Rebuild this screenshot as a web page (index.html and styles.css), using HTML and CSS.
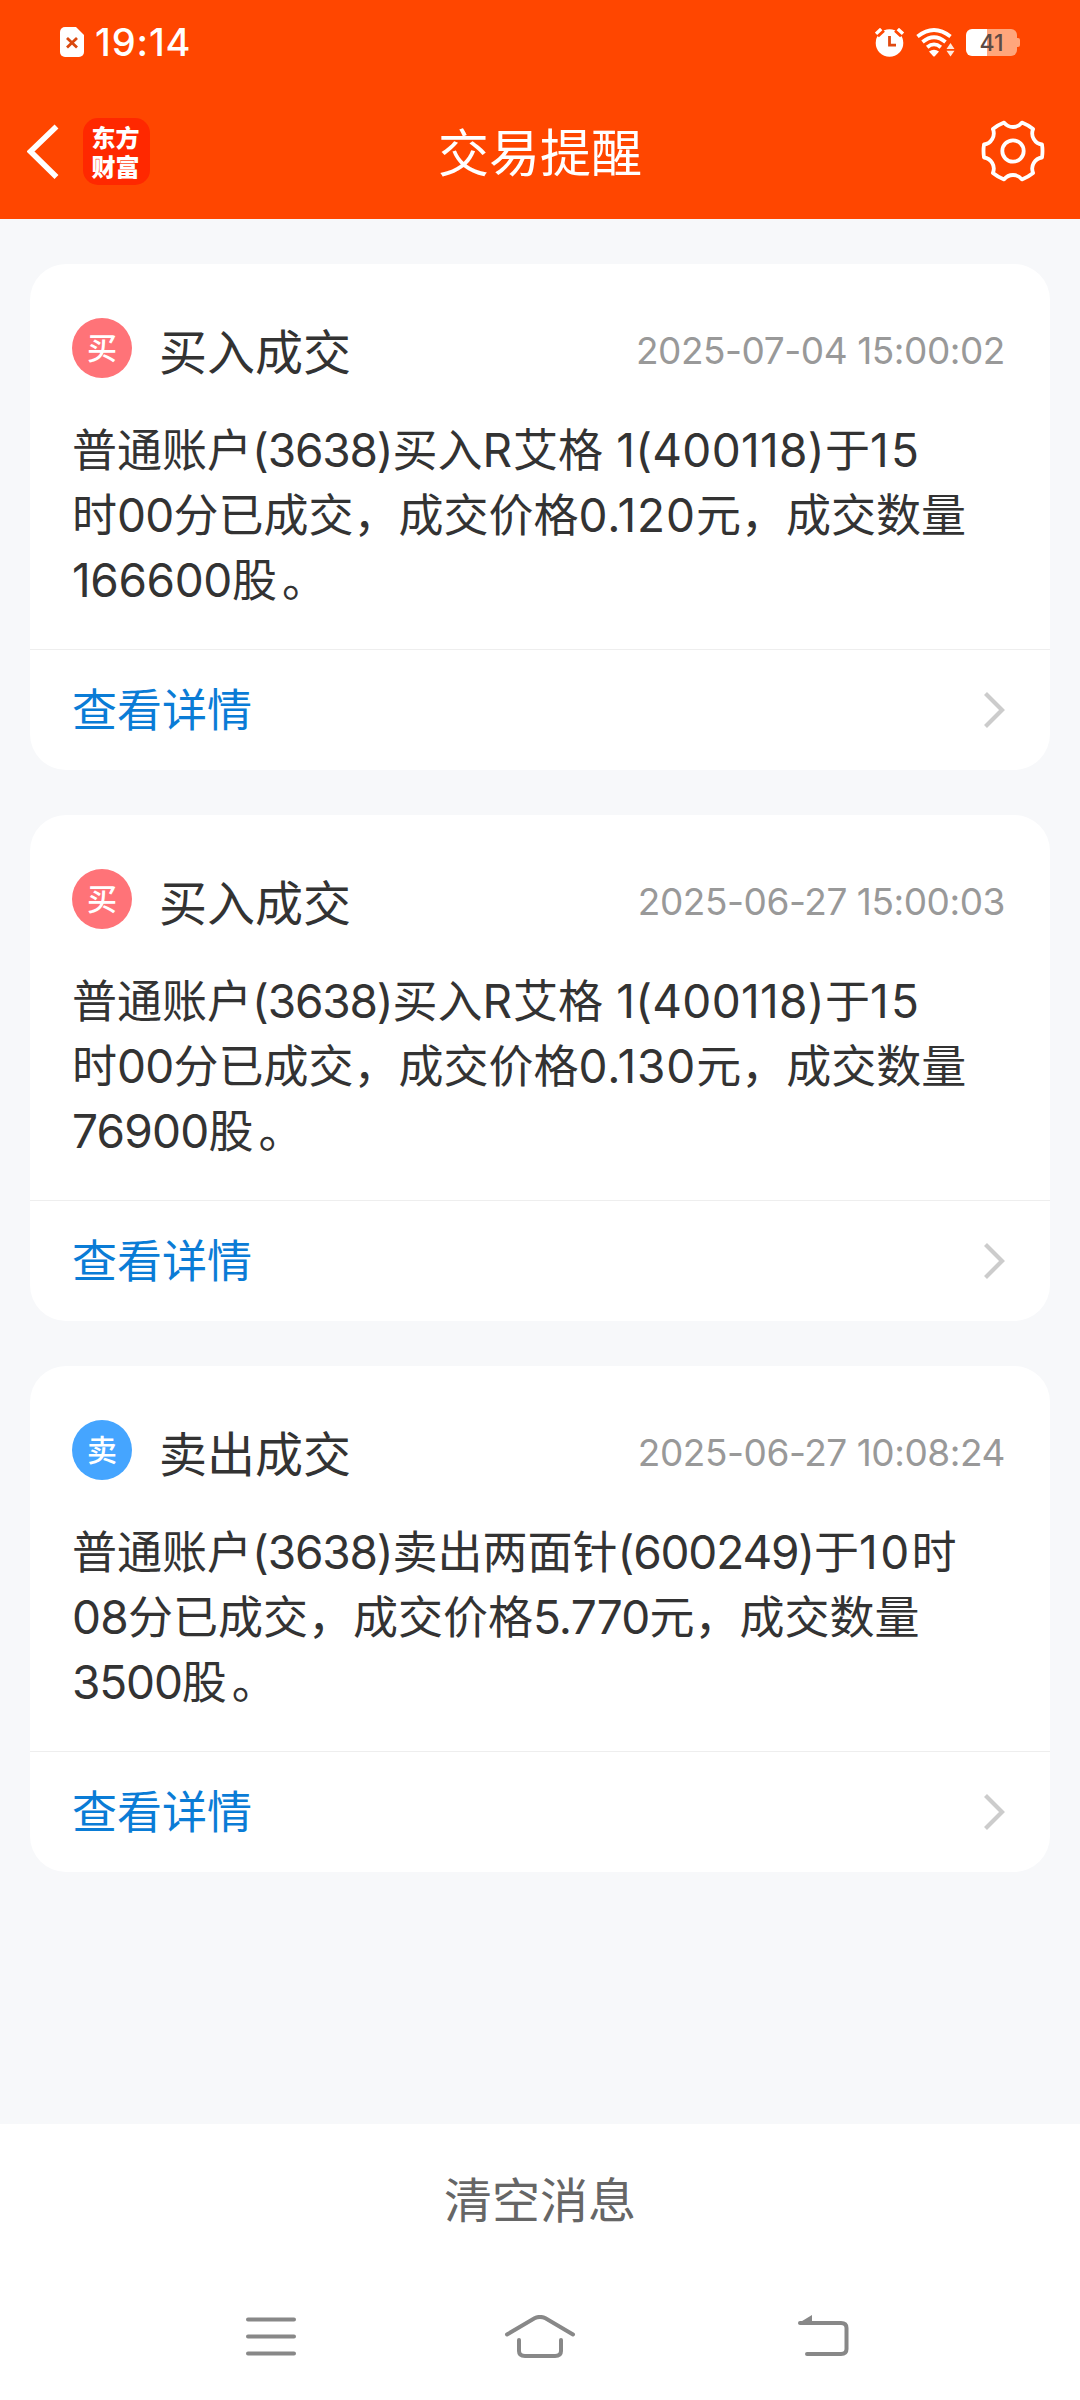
FILE: index.html
```html
<!DOCTYPE html>
<html lang="zh-CN">
<head>
<meta charset="utf-8">
<title>交易提醒</title>
<link rel="stylesheet" href="styles.css">
</head>
<body>
<div class="screen">
  <header class="header">
    <div class="status">
      <div class="status-side">
        <svg class="sim" width="24" height="30" viewBox="0 0 24 30"><path d="M5 0H16L24 8V25a5 5 0 0 1-5 5H5a5 5 0 0 1-5-5V5a5 5 0 0 1 5-5Z" fill="#fff"/><path d="M7 11l10 9.500M17 11L7 20.500" stroke="#d9480f" stroke-width="2.800"/></svg>
        <span class="clock">19:14</span>
      </div>
      <div class="status-side">
        <svg width="30" height="29" viewBox="0 0 30 29"><circle cx="14.500" cy="15" r="13.800" fill="#fff"/><path d="M1.500 6.800L7.500 1.200M27.500 6.800L21.500 1.200" stroke="#ff4600" stroke-width="7"/><path d="M1 5.800L6.200 1M28 5.800L22.800 1" stroke="#fff" stroke-width="3.400"/><path d="M14.500 8v9.200H21" fill="none" stroke="#e04a10" stroke-width="2.800"/></svg>
        <svg class="wifi" width="39" height="29" viewBox="0 0 39 29"><g fill="none" stroke="#fff" stroke-width="3.800"><path d="M1.500 8.500Q18 -4.500 34.500 8.500"/><path d="M6.500 14Q18 4.500 29.500 14"/><path d="M11.200 19.300Q18 13.500 24.800 19.300"/></g><path d="M13 23.500Q18 20 23 23.500L19 28Q18 29 17 28Z" fill="#fff"/><path d="M34.500 15L38.500 21H30.500ZM34.500 28.500L38.500 22.800H30.500Z" fill="#ffe9dc"/></svg>
        <div class="battery"><span class="battery-level">41</span><i class="battery-tip"></i></div>
      </div>
    </div>
    <div class="nav">
      <div class="nav-left">
        <svg width="32" height="56" viewBox="0 0 32 56"><path d="M29.500 2.500L3.500 27.500L29.500 53" fill="none" stroke="#fff" stroke-width="5.600"/></svg>
        <div class="logo">东方<br>财富</div>
      </div>
      <h1 class="title">交易提醒</h1>
      <div class="nav-right">
        <svg width="64" height="64" viewBox="-32 -32 64 64" fill="none" stroke="#fff" stroke-width="3.800" stroke-linejoin="round"><path d="M29 -6.500Q30 0 29 6.500A11.200 11.200 0 0 0 20.100 21.900Q15 26 8.900 28.400A11.200 11.200 0 0 0 -8.900 28.400Q-15 26 -20.100 21.900A11.200 11.200 0 0 0 -29 6.500Q-30 0 -29 -6.500A11.200 11.200 0 0 0 -20.100 -21.900Q-15 -26 -8.900 -28.400A11.200 11.200 0 0 0 8.900 -28.400Q15 -26 20.100 -21.900A11.200 11.200 0 0 0 29 -6.500Z"/><circle r="10.700"/></svg>
      </div>
    </div>
  </header>

  <main class="list">
    <article class="card">
      <div class="card-head">
        <span class="badge buy">买</span>
        <h2 class="card-title">买入成交</h2>
        <time class="time">2025-07-04 15:00:02</time>
      </div>
      <p class="body"><span class="line">普通账户<b class="tight">(3638)</b>买入<b class="loose">R</b>艾格<b class="open"> 1(400118)</b>于<b class="wide">15</b></span><span class="line">时<b class="snug">00</b>分已成交，成交价格<b class="loose">0.120</b>元，成交数量</span><span class="line"><b class="slim">166600</b>股<i class="stop">。</i></span></p>
      <div class="more"><span>查看详情</span><svg width="22" height="38" viewBox="0 0 22 38"><path d="M2.500 2.500L19 19L2.500 35.500" fill="none" stroke="#ccc" stroke-width="4.200"/></svg></div>
    </article>

    <article class="card">
      <div class="card-head">
        <span class="badge buy">买</span>
        <h2 class="card-title">买入成交</h2>
        <time class="time">2025-06-27 15:00:03</time>
      </div>
      <p class="body"><span class="line">普通账户<b class="tight">(3638)</b>买入<b class="loose">R</b>艾格<b class="open"> 1(400118)</b>于<b class="wide">15</b></span><span class="line">时<b class="snug">00</b>分已成交，成交价格<b class="loose">0.130</b>元，成交数量</span><span class="line"><b class="snug">76900</b>股<i class="stop">。</i></span></p>
      <div class="more"><span>查看详情</span><svg width="22" height="38" viewBox="0 0 22 38"><path d="M2.500 2.500L19 19L2.500 35.500" fill="none" stroke="#ccc" stroke-width="4.200"/></svg></div>
    </article>

    <article class="card">
      <div class="card-head">
        <span class="badge sell">卖</span>
        <h2 class="card-title">卖出成交</h2>
        <time class="time">2025-06-27 10:08:24</time>
      </div>
      <p class="body"><span class="line">普通账户<b class="tight">(3638)</b>卖出两面针<b class="tight">(600249)</b>于<b class="wide">10</b>时</span><span class="line"><b class="snug">08</b>分已成交，成交价格<b class="snug">5.770</b>元，成交数量</span><span class="line"><b class="tight">3500</b>股<i class="stop">。</i></span></p>
      <div class="more"><span>查看详情</span><svg width="22" height="38" viewBox="0 0 22 38"><path d="M2.500 2.500L19 19L2.500 35.500" fill="none" stroke="#ccc" stroke-width="4.200"/></svg></div>
    </article>
  </main>

  <footer class="footer">
    <div class="clear">清空消息</div>
    <div class="keys">
      <svg width="52" height="44" viewBox="0 0 52 44"><path d="M2 4.500H48M2 21.500H48M2 38.500H48" stroke="#888" stroke-width="4" stroke-linecap="round"/></svg>
      <svg class="home" width="72" height="44" viewBox="0 0 72 44" fill="none" stroke="#888" stroke-width="4" stroke-linecap="round"><path d="M3 19.500L30.500 3.300Q36 .5 41.500 3.300L69 19.500"/><path d="M15 25V36Q15 41 21 41H51Q57 41 57 36V25"/></svg>
      <svg class="back" width="52" height="44" viewBox="0 0 52 44" fill="none" stroke="#888" stroke-width="4" stroke-linecap="round"><path d="M3 8H44Q49.500 8 49.500 13V34Q49.500 39 44 39H10"/><path d="M1 8.500L15 0V8Z" fill="#888" stroke="none"/></svg>
    </div>
  </footer>
</div>
</body>
</html>
```
FILE: styles.css
```css
* { box-sizing: border-box; }
body { margin: 0; background: #f7f8fa; }
h1, h2, p { margin: 0; font-weight: 400; }
svg { display: block; flex: none; }

.screen {
  width: 1080px;
  height: 2400px;
  display: flex;
  flex-direction: column;
  font-family: "Noto Sans CJK SC", sans-serif;
  color: #333;
}

.header { height: 219px; background: #ff4600; color: #fff; }
.status {
  height: 84px;
  padding: 0 60px;
  display: flex;
  justify-content: space-between;
  align-items: center;
}
.status-side { display: flex; align-items: center; gap: 11px; }
.clock { font: 500 38px/44px Inter, sans-serif; letter-spacing: .9px; }
.battery { width: 54px; height: 27px; display: flex; align-items: center; }
.battery-level {
  width: 51px;
  height: 27px;
  border-radius: 6px;
  background: linear-gradient(90deg, #fff 21px, #ffa67c 21px);
  color: #5c4a44;
  font: 500 23px/28px Inter, sans-serif;
  text-align: center;
}
.battery-tip { width: 3px; height: 9px; background: #ffa67c; border-radius: 0 2px 2px 0; }

.nav {
  height: 135px;
  padding: 0 35px 2px 27px;
  display: grid;
  grid-template-columns: 1fr auto 1fr;
  align-items: center;
}
.nav-left { display: flex; align-items: center; gap: 24px; padding-top: 2px; }
.nav-right { display: flex; justify-content: flex-end; }
.logo {
  width: 67px;
  height: 67px;
  padding: 4px 2px 0 0;
  border-radius: 15px;
  background: #ff2800;
  font-weight: 900;
  font-size: 24px;
  line-height: 29px;
  text-align: center;
}
.title { font-size: 51px; line-height: 72px; padding-left: 8px; padding-bottom: 2px; }

.list {
  flex: 1;
  padding: 45px 30px 0;
  display: flex;
  flex-direction: column;
  gap: 45px;
}
.card { height: 506px; border-radius: 36px; background: #fff; }
.card-head {
  height: 154px;
  padding: 14px 45px 0 42px;
  display: flex;
  align-items: center;
}
.badge {
  width: 60px;
  height: 60px;
  border-radius: 50%;
  color: #fff;
  font-size: 30px;
  font-weight: 500;
  line-height: 57px;
  text-align: center;
}
.buy { background: #ff7378; }
.sell { background: #45a5ff; }
.card-title { margin-left: 27px; font-size: 48px; line-height: 70px; padding-top: 2px; }
.time {
  margin-left: auto;
  padding-top: 5px;
  font: 400 37px/44px Inter, sans-serif;
  letter-spacing: -.45px;
  color: #999;
}

.body { height: 231px; padding-left: 42px; font-size: 45px; margin-top: -3px; margin-bottom: 3px; }
.line { display: block; height: 65px; line-height: 65px; white-space: pre; }
.line b { font-family: Inter, sans-serif; font-weight: 400; font-size: 46px; line-height: 1; }
.tight { letter-spacing: -1.15px; }
.snug { letter-spacing: -.8px; }
.slim { letter-spacing: -.4px; }
.open { letter-spacing: .3px; }
.loose { letter-spacing: .9px; }
.wide { letter-spacing: 2.4px; }
.stop { font-style: normal; padding-left: 5px; }

.more {
  height: 121px;
  padding: 0 45px 0 42px;
  border-top: 1px solid #eee;
  display: flex;
  align-items: center;
  justify-content: space-between;
  color: #0a7cd6;
  font-size: 45px;
  line-height: 65px;
}
.more span { padding-bottom: 5px; }

.footer { height: 276px; background: #fff; }
.clear { height: 152px; font-size: 48px; line-height: 146px; text-align: center; color: #666; }
.keys { padding: 39px 0 0 246px; display: flex; }
.home { margin-left: 206px; }
.back { margin-left: 221px; }
```
